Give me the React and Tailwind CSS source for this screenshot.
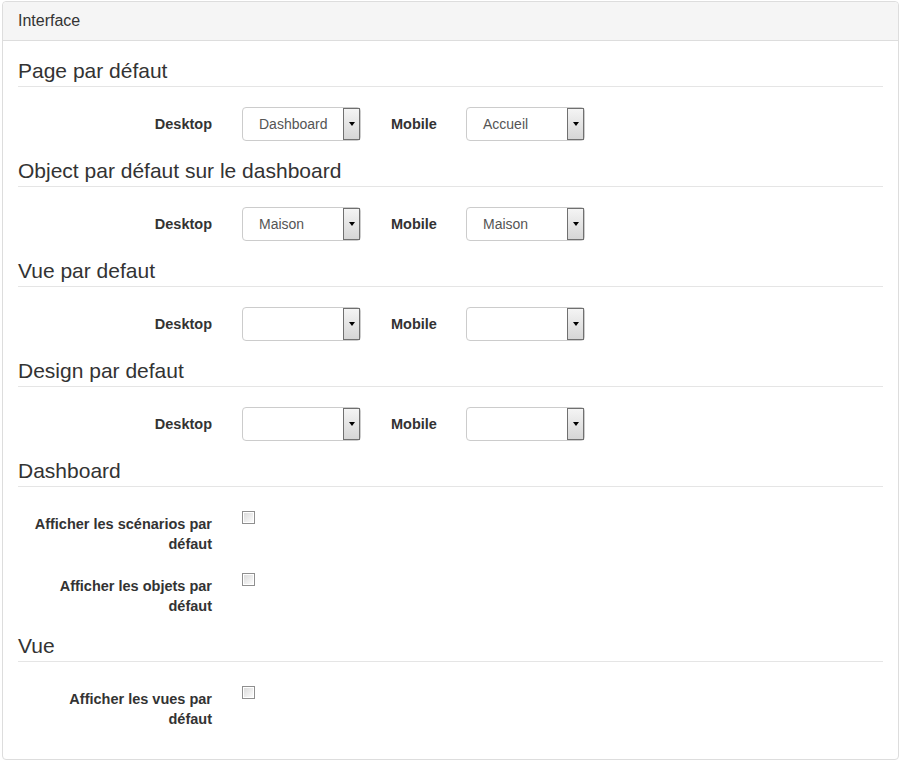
import React from 'react'

const sections = [
  { title: 'Page par défaut', desktop: 'Dashboard', mobile: 'Accueil' },
  { title: 'Object par défaut sur le dashboard', desktop: 'Maison', mobile: 'Maison' },
  { title: 'Vue par defaut', desktop: '', mobile: '' },
  { title: 'Design par defaut', desktop: '', mobile: '' },
]

function Legend({ children }) {
  return (
    <div className="mb-[20px] h-[31px] border-b border-[#e5e5e5] text-[21px] leading-[30px] text-[#333]">
      {children}
    </div>
  )
}

function FakeSelect({ value }) {
  return (
    <div className="relative flex h-[34px] w-[119px] items-center rounded-[4px] border border-[#ccc] bg-white pl-[16px] text-[14px] text-[#555]">
      <span>{value}</span>
      <div className="absolute right-0 top-0 flex h-[32px] w-[17px] items-center justify-center border border-[#707070] bg-gradient-to-b from-[#f4f4f4] to-[#d6d6d6]">
        <div className="h-0 w-0 border-x-[3.5px] border-t-[4px] border-x-transparent border-t-black" />
      </div>
    </div>
  )
}

function Checkbox() {
  return (
    <div className="mt-[4px] flex h-[13px] w-[13px] items-center justify-center border border-[#8f8f8f] bg-white">
      <div className="h-[9px] w-[9px] bg-gradient-to-br from-[#dcdcdc] to-[#fbfbfb]" />
    </div>
  )
}

function CheckRow({ label }) {
  return (
    <div className="mb-[15px] flex">
      <div className="w-[194px] pl-[12px] pt-[7px] text-right text-[14.5px] font-bold leading-[20px] text-[#333]">
        {label}
      </div>
      <div className="ml-[30px]">
        <Checkbox />
      </div>
    </div>
  )
}

export default function App() {
  return (
    <div
      className="min-h-screen bg-white pt-[1px]"
      style={{ fontFamily: '"Liberation Sans", Arial, sans-serif' }}
    >
      <div className="ml-[2px] w-[897px] rounded-[4px] border border-[#ddd] bg-white">
        <div className="rounded-t-[4px] border-b border-[#ddd] bg-[#f5f5f5] px-[15px] py-[10px] text-[16px] leading-[18px] text-[#333]">
          Interface
        </div>
        <div className="p-[15px]">
          {sections.map((s) => (
            <div key={s.title}>
              <Legend>{s.title}</Legend>
              <div className="mb-[15px] flex">
                <div className="w-[194px] pt-[7px] text-right text-[14.5px] font-bold leading-[20px] text-[#333]">
                  Desktop
                </div>
                <div className="ml-[30px]">
                  <FakeSelect value={s.desktop} />
                </div>
                <div className="ml-[30px] w-[45px] whitespace-nowrap pt-[7px] text-[14.5px] font-bold leading-[20px] text-[#333]">
                  Mobile
                </div>
                <div className="ml-[30px]">
                  <FakeSelect value={s.mobile} />
                </div>
              </div>
            </div>
          ))}
          <Legend>Dashboard</Legend>
          <CheckRow label="Afficher les scénarios par défaut" />
          <CheckRow label="Afficher les objets par défaut" />
          <Legend>Vue</Legend>
          <CheckRow label="Afficher les vues par défaut" />
        </div>
      </div>
    </div>
  )
}
